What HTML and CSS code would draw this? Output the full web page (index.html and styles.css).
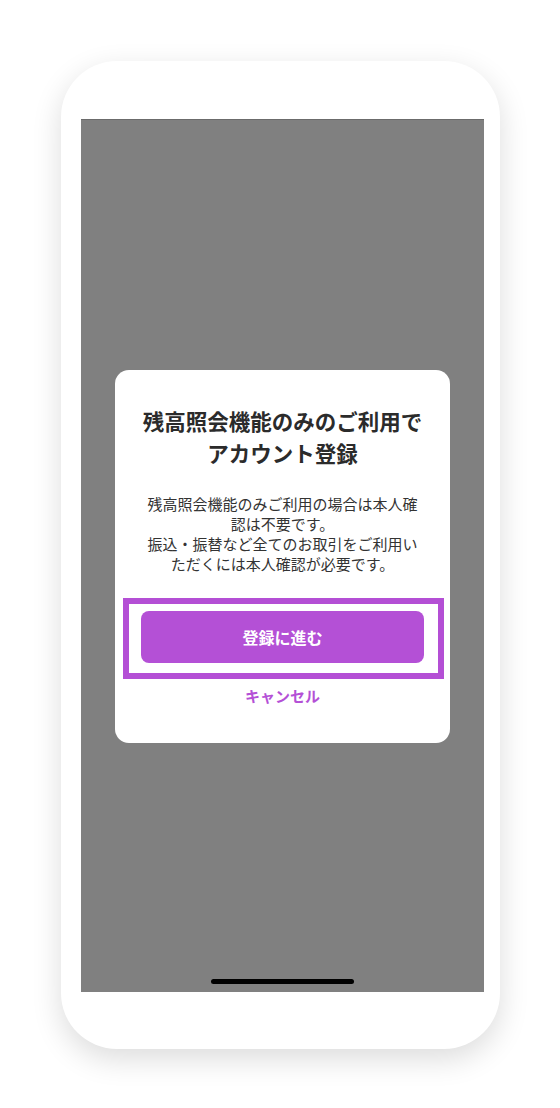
FILE: index.html
```html
<!DOCTYPE html>
<html lang="ja">
<head>
<meta charset="UTF-8">
<meta name="viewport" content="width=device-width, initial-scale=1.0">
<title>アカウント登録</title>
<link rel="stylesheet" href="styles.css">
</head>
<body>
<div class="phone">
  <div class="screen">
    <div class="modal">
      <h1 class="modal-title">残高照会機能のみのご利用で<br>アカウント登録</h1>
      <p class="modal-text">残高照会機能のみご利用の場合は本人確認は不要です。<br>振込・振替など全てのお取引をご利用いただくには本人確認が必要です。</p>
      <div class="highlight">
        <button class="btn-primary">登録に進む</button>
      </div>
      <a class="btn-cancel">キャンセル</a>
    </div>
    <div class="home-bar"></div>
  </div>
</div>
</body>
</html>
```

FILE: styles.css
```css
html, body {
  margin: 0;
  background: #fff;
}
body {
  padding: 61px 60px 59px 61px;
  font-family: "Noto Sans CJK JP", "Noto Sans", sans-serif;
  color: #333;
}
.phone {
  width: 439px;
  height: 988px;
  box-sizing: border-box;
  padding: 58px 16px 57px 20px;
  background: #fff;
  border-radius: 56px;
  box-shadow: 0 10px 30px rgba(0, 0, 0, 0.14);
}
.screen {
  position: relative;
  height: 100%;
  background: #808080;
  border-top: 1px solid #6b6b6b;
  box-sizing: border-box;
  display: flex;
  align-items: center;
  justify-content: center;
}
.modal {
  width: 335px;
  box-sizing: border-box;
  padding: 35px 26px 37px;
  background: #fff;
  border-radius: 14px;
  text-align: center;
}
.modal-title {
  margin: 0;
  font-size: 21.5px;
  line-height: 32px;
  font-weight: 700;
  color: #2b2b2b;
  white-space: nowrap;
}
.modal-text {
  margin: 25px 0 0;
  font-size: 15px;
  line-height: 20px;
  color: #333;
}
.highlight {
  margin: 24px -20px 0 -18px;
  padding: 7px 14px 10px 12px;
  border: 6px solid #b44fd5;
}
.btn-primary {
  display: block;
  width: 100%;
  height: 52px;
  border: 0;
  border-radius: 8px;
  background: #b450d6;
  color: #fff;
  font-family: inherit;
  font-size: 16px;
  font-weight: 700;
}
.btn-cancel {
  display: block;
  margin-top: 7px;
  font-size: 15px;
  line-height: 20px;
  font-weight: 700;
  color: #b450d6;
}
.home-bar {
  position: absolute;
  left: 130px;
  bottom: 8px;
  width: 143px;
  height: 5px;
  border-radius: 3px;
  background: #000;
}
```
